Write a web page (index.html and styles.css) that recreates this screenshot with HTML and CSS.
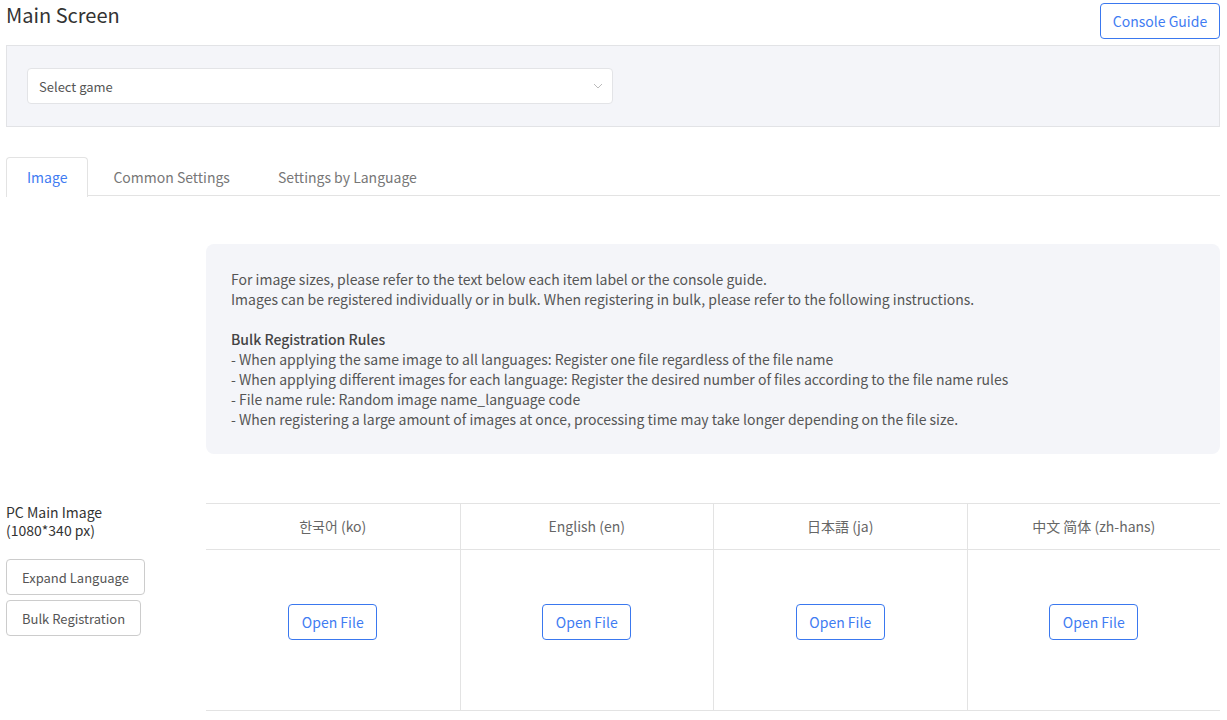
FILE: index.html
```html
<!DOCTYPE html>
<html lang="en">
<head>
  <meta charset="UTF-8" />
  <title>Main Screen</title>
  <link rel="stylesheet" href="styles.css">
</head>
<body>
  <header class="page-head">
    <h1>Main Screen</h1>
    <button class="btn btn-primary">Console Guide</button>
  </header>

  <div class="filter-panel">
    <div class="select">
      <span>Select game</span>
      <svg width="10" height="6" viewBox="0 0 10 6"><path d="M1 1l4 4 4-4" fill="none" stroke="#bbb" stroke-width="1"/></svg>
    </div>
  </div>

  <nav class="tabs">
    <div class="tab active">Image</div>
    <div class="tab">Common Settings</div>
    <div class="tab">Settings by Language</div>
  </nav>

  <div class="content">
    <div class="notice">
      <p>For image sizes, please refer to the text below each item label or the console guide.<br>
      Images can be registered individually or in bulk. When registering in bulk, please refer to the following instructions.</p>
      <p><strong>Bulk Registration Rules</strong><br>
      - When applying the same image to all languages: Register one file regardless of the file name<br>
      - When applying different images for each language: Register the desired number of files according to the file name rules<br>
      - File name rule: Random image name_language code<br>
      - When registering a large amount of images at once, processing time may take longer depending on the file size.</p>
    </div>

    <div class="image-row">
      <div class="row-label">
        <div class="label-text">PC Main Image<br>(1080*340 px)</div>
        <div class="label-actions">
          <button class="btn">Expand Language</button>
          <button class="btn">Bulk Registration</button>
        </div>
      </div>
      <div class="lang-table">
        <div class="lang-col">
          <div class="lang-head">한국어 (ko)</div>
          <div class="lang-body"><button class="btn btn-primary">Open File</button></div>
        </div>
        <div class="lang-col">
          <div class="lang-head">English (en)</div>
          <div class="lang-body"><button class="btn btn-primary">Open File</button></div>
        </div>
        <div class="lang-col">
          <div class="lang-head" lang="ja">日本語 (ja)</div>
          <div class="lang-body"><button class="btn btn-primary">Open File</button></div>
        </div>
        <div class="lang-col">
          <div class="lang-head" lang="zh-Hans">中文 简体 (zh-hans)</div>
          <div class="lang-body"><button class="btn btn-primary">Open File</button></div>
        </div>
      </div>
    </div>
  </div>
</body>
</html>
```

FILE: styles.css
```css
body {
  font-family: "Noto Sans CJK KR", "Noto Sans", sans-serif;
  color: #333;
  background: #fff;
  margin: 0;
  padding: 3px 7px 0 6px;
  font-size: 14px;
}
.page-head {
  display: flex;
  justify-content: space-between;
  align-items: flex-start;
  height: 42px;
}
.page-head h1 {
  margin: 0;
  font-size: 20px;
  font-weight: 400;
  line-height: 24px;
  color: #333;
}
.btn {
  font-family: inherit;
  font-size: 13px;
  height: 36px;
  padding: 0 15px;
  background: #fff;
  color: #555;
  border: 1px solid #ccc;
  border-radius: 4px;
  cursor: pointer;
}
.btn-primary {
  color: #3f7cf2;
  border-color: #3a78ef;
  font-size: 14px;
}
.page-head .btn {
  width: 120px;
  padding: 0;
}
.filter-panel {
  background: #f4f5f9;
  border: 1px solid #e2e3e6;
  padding: 22px 20px 22px;
}
.select {
  width: 586px;
  height: 36px;
  box-sizing: border-box;
  background: #fff;
  border: 1px solid #e3e4e7;
  border-radius: 4px;
  display: flex;
  align-items: center;
  justify-content: space-between;
  padding: 0 9px 0 11px;
  font-size: 13px;
  color: #555;
}
.tabs {
  display: flex;
  margin-top: 30px;
  border-bottom: 1px solid #e3e3e3;
  height: 38px;
}
.tab {
  padding: 0 22px 0 24px;
  line-height: 38px;
  color: #777;
  font-size: 14px;
  border: 1px solid transparent;
  border-bottom: none;
  border-radius: 4px 4px 0 0;
}
.tab.active {
  color: #3f7cf2;
  border-color: #e3e3e3;
  background: #fff;
  height: 39px;
  padding: 0 20px;
}
.content {
  padding-left: 200px;
}
.notice {
  margin-top: 48px;
  background: #f4f5f9;
  border-radius: 8px;
  padding: 25px 25px 25px;
  color: #555;
  line-height: 20px;
  font-size: 14px;
}
.notice p {
  margin: 0;
}
.notice p + p {
  margin-top: 20px;
}
.notice strong {
  font-weight: 500;
  color: #444;
}
.image-row {
  display: flex;
  margin-top: 49px;
  margin-left: -200px;
}
.row-label {
  width: 200px;
  flex: none;
}
.label-text {
  line-height: 18px;
  font-size: 14px;
  color: #333;
}
.label-actions {
  margin-top: 20px;
  display: flex;
  flex-direction: column;
  align-items: flex-start;
  gap: 5px;
}
.label-actions .btn {
  height: 36px;
  padding: 0 15px;
}
.lang-table {
  flex: 1;
  display: grid;
  grid-template-columns: repeat(4, 1fr);
  border-top: 1px solid #e3e3e3;
  border-bottom: 1px solid #e3e3e3;
}
.lang-col + .lang-col {
  border-left: 1px solid #e3e3e3;
}
.lang-head {
  height: 45px;
  line-height: 45px;
  text-align: center;
  color: #666;
  border-bottom: 1px solid #e3e3e3;
}
.lang-head[lang="ja"] {
  font-family: "Noto Sans CJK JP", "Noto Sans", sans-serif;
}
.lang-head[lang="zh-Hans"] {
  font-family: "Noto Sans CJK SC", "Noto Sans", sans-serif;
}
.lang-body {
  height: 160px;
  box-sizing: border-box;
  padding-top: 54px;
  display: flex;
  align-items: flex-start;
  justify-content: center;
}
.lang-body .btn {
  width: 89px;
  padding: 0;
}
```
